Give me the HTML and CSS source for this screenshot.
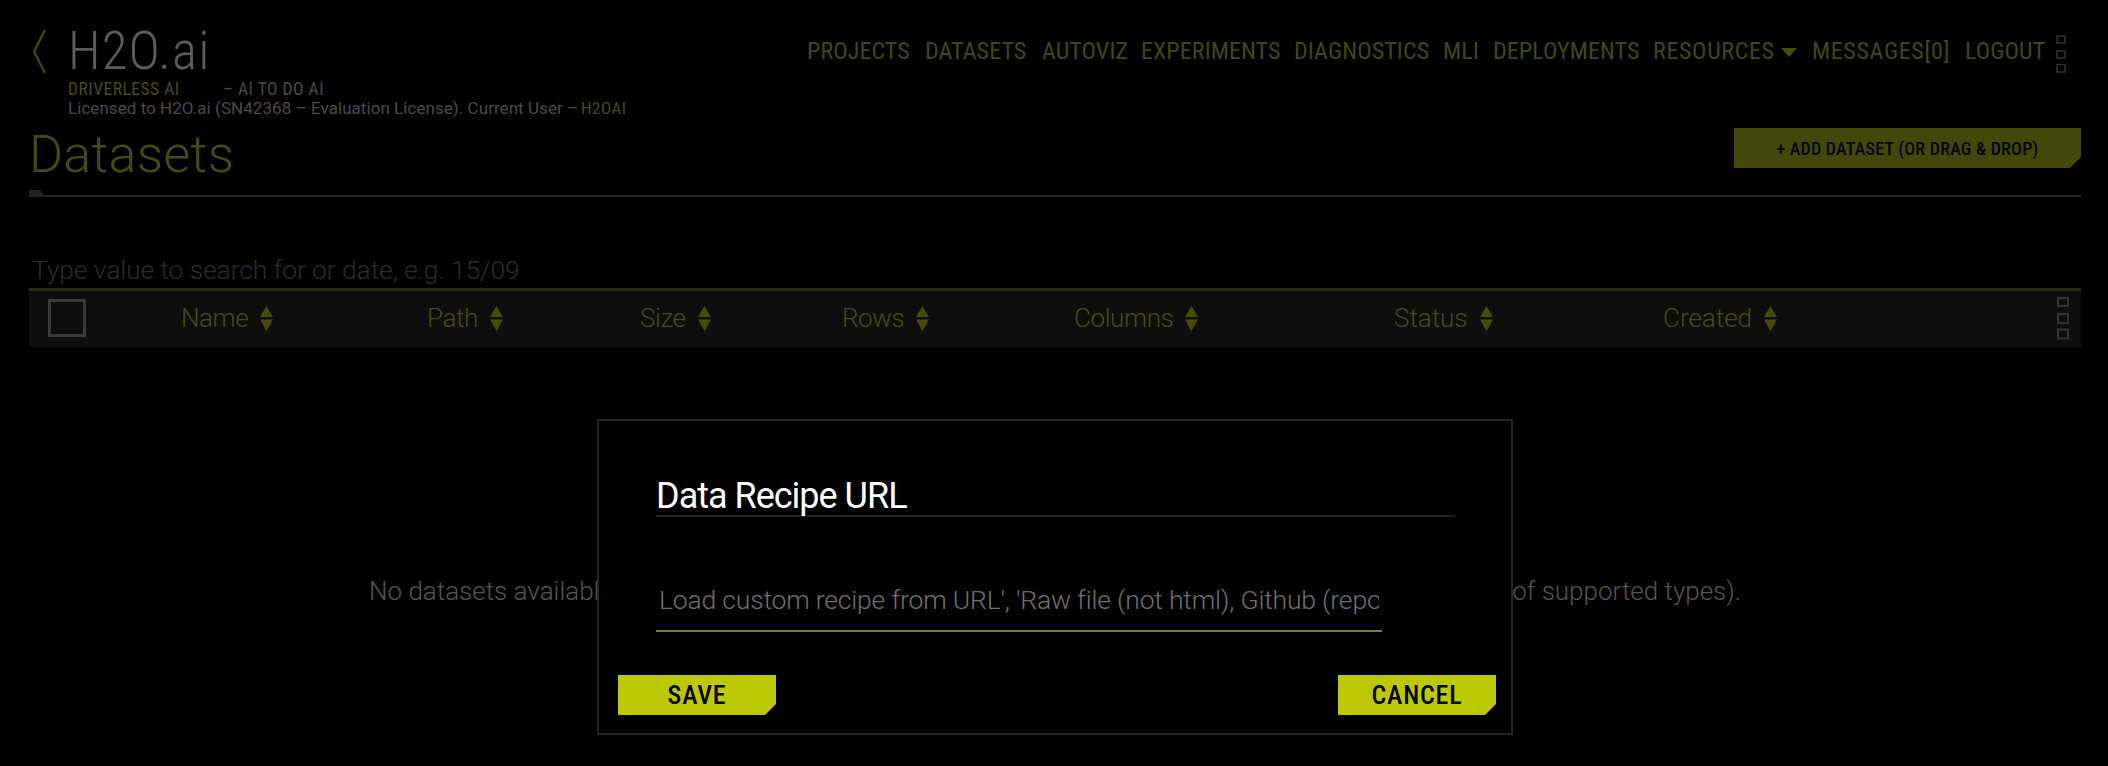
FILE: index.html
```html
<!DOCTYPE html>
<html lang="en">
<head>
<meta charset="utf-8">
<title>Datasets</title>
<link rel="stylesheet" href="styles.css">
</head>
<body>
<div class="page">
  <header class="top">
    <svg class="back" width="15" height="45" viewBox="0 0 15 45"><path d="M14 1 3 22.500 14 44" fill="none" stroke="currentColor" stroke-width="2.200"/></svg>
    <div class="brand">
      <div class="logo">H2O.ai</div>
      <div class="tagline"><span class="product">DRIVERLESS AI</span><span class="motto">– AI TO DO AI</span></div>
      <div class="license"><span class="holder">Licensed to H2O.ai (SN42368 – Evaluation License). Current User –</span><span class="user">H2OAI</span></div>
    </div>
    <nav class="nav">
      <a>PROJECTS</a><a>DATASETS</a><a>AUTOVIZ</a><a>EXPERIMENTS</a><a>DIAGNOSTICS</a><a>MLI</a><a>DEPLOYMENTS</a><a class="wide">RESOURCES</a><i class="caret"></i><a class="wide">MESSAGES[0]</a><a>LOGOUT</a>
      <svg class="dots" width="10" height="38" viewBox="0 0 10 38"><path d="M1 1h8v7H1zM1 16h8v7H1zM1 29.500h8v7.500H1z" fill="none" stroke="currentColor" stroke-width="1.500"/></svg>
    </nav>
  </header>
  <div class="heading">
    <h1>Datasets</h1>
    <button class="btn add"><span>+ ADD DATASET (OR DRAG &amp; DROP)</span></button>
  </div>
  <svg class="rule" width="2052" height="7" viewBox="0 0 2052 7"><path d="M0 0h11l4 5h2037v2H0z" fill="currentColor"/></svg>
  <div class="search">Type value to search for or date, e.g. 15/09</div>
  <div class="thead">
    <i class="check"></i>
    <div class="col name"><span>Name</span><svg class="sort" viewBox="0 0 13 25"><path d="M6.500 0 13 11H0zM0 13.500h13L6.500 25z" fill="currentColor"/></svg></div>
    <div class="col path"><span>Path</span><svg class="sort" viewBox="0 0 13 25"><path d="M6.500 0 13 11H0zM0 13.500h13L6.500 25z" fill="currentColor"/></svg></div>
    <div class="col size"><span>Size</span><svg class="sort" viewBox="0 0 13 25"><path d="M6.500 0 13 11H0zM0 13.500h13L6.500 25z" fill="currentColor"/></svg></div>
    <div class="col rows"><span>Rows</span><svg class="sort" viewBox="0 0 13 25"><path d="M6.500 0 13 11H0zM0 13.500h13L6.500 25z" fill="currentColor"/></svg></div>
    <div class="col columns"><span>Columns</span><svg class="sort" viewBox="0 0 13 25"><path d="M6.500 0 13 11H0zM0 13.500h13L6.500 25z" fill="currentColor"/></svg></div>
    <div class="col status"><span>Status</span><svg class="sort" viewBox="0 0 13 25"><path d="M6.500 0 13 11H0zM0 13.500h13L6.500 25z" fill="currentColor"/></svg></div>
    <div class="col created"><span>Created</span><svg class="sort" viewBox="0 0 13 25"><path d="M6.500 0 13 11H0zM0 13.500h13L6.500 25z" fill="currentColor"/></svg></div>
    <svg class="more" width="12" height="43" viewBox="0 0 12 43"><path d="M1 1h10v8H1zM1 17h10v9H1zM1 32.500h10v9H1z" fill="none" stroke="currentColor" stroke-width="2"/></svg>
  </div>
  <div class="empty"><span>No datasets available</span><span class="types">of supported types).</span></div>
</div>
<div class="modal">
  <h2><span>Data Recipe URL</span></h2>
  <div class="field"><span>Load custom recipe from URL', 'Raw file (not html), Github (repo</span></div>
  <div class="actions">
    <button class="btn save">SAVE</button>
    <button class="btn cancel">CANCEL</button>
  </div>
</div>
</body>
</html>
```
FILE: styles.css
```css
* { box-sizing: border-box; }
body {
  margin: 0;
  width: 2108px;
  height: 766px;
  overflow: hidden;
  background: #000;
  color: #4a4a4a;
  font-family: Roboto, sans-serif;
  font-stretch: 75%;
  white-space: nowrap;
}
.page { padding: 0 27px 0 29px; }
.top { display: flex; height: 122px; }
.back { margin: 29px 0 0 2px; color: #464d0b; flex: none; }
.brand { margin: 20px 0 0 22px; width: 640px; }
.logo { height: 60px; line-height: 62px; font-size: 53px; font-weight: 300; color: #5c5c5c; letter-spacing: 1.1px; }
.tagline { display: flex; height: 19px; line-height: 19px; font-size: 17.5px; letter-spacing: .5px; }
.product { width: 155px; color: #464d0b; }
.license { display: flex; height: 19px; line-height: 19px; font-size: 17px; font-stretch: 100%; letter-spacing: .05px; }
.holder { width: 513px; }
.user { color: #464d0b; font-stretch: 75%; letter-spacing: .5px; }
.nav {
  display: grid;
  grid-template-columns: 118px 117px 99px 153px 149px 50px 160px 128px 31px 153px 91px 10px;
  margin: 34px 0 0 99px;
  height: 40px;
  line-height: 35px;
  font-size: 24px;
  color: #41480b;
  letter-spacing: .1px;
}
.wide { letter-spacing: .65px; }
.caret { width: 16px; height: 9px; margin-top: 14px; background: #464d0b; clip-path: polygon(0 0, 100% 0, 50% 100%); }
.dots { margin-top: 1px; color: #333; }
.heading { display: flex; justify-content: space-between; height: 68px; }
h1 { margin: 0; line-height: 66px; font-size: 52px; font-weight: 300; color: #464b0b; font-stretch: 100%; letter-spacing: .3px; }
.btn {
  height: 40px;
  padding: 0;
  border: 0;
  background: #bdc906;
  color: #060600;
  font: 500 26px/40px Roboto, sans-serif;
  font-stretch: 75%;
  letter-spacing: .8px;
  clip-path: polygon(0 0, 100% 0, 100% 29px, calc(100% - 11px) 100%, 0 100%);
}
.add { width: 347px; margin-top: 6px; background: #42470a; font-size: 18px; line-height: 39px; letter-spacing: .22px; }
.rule { display: block; color: #222; }
.search { height: 93px; padding: 55px 0 0 3px; line-height: 36px; font-size: 26.500px; font-weight: 300; color: #2c2c2c; font-stretch: 100%; letter-spacing: -.12px; }
.thead {
  display: grid;
  grid-template-columns: 133px 246px 213px 202px 232px 320px 269px 394px 12px;
  height: 59px;
  margin-top: -2px;
  padding-left: 19px;
  background: #0e0e0e;
  border-top: 3px solid #292b0b;
  color: #464d0b;
}
.check { width: 38px; height: 38px; margin-top: 8px; border: 3px solid #3a3a3a; }
.col { display: flex; gap: 12px; font-size: 26px; line-height: 54px; font-weight: 300; font-stretch: 100%; letter-spacing: -.4px; }
.status, .created { letter-spacing: 0; }
.sort { width: 13px; height: 25px; margin-top: 15px; }
.more { margin-top: 6px; color: #333; }
.empty { display: flex; justify-content: space-between; padding: 224px 340px 0 340px; line-height: 40px; font-size: 26px; font-weight: 300; color: #555; font-stretch: 100%; }
.modal {
  position: absolute;
  left: 597px;
  top: 419px;
  width: 916px;
  height: 316px;
  padding: 57px 15px 0 19px;
  background: #000;
  border: 2px solid #242424;
}
h2 { width: 799px; height: 39px; margin: 0 0 0 38px; line-height: 37px; font-size: 36px; font-weight: 400; color: #fff; border-bottom: 2px solid #222; font-stretch: 100%; letter-spacing: -1px; }
.field { width: 726px; height: 68px; margin: 47px 0 0 38px; padding: 18px 3px 0 3px; line-height: 36px; font-size: 26.500px; font-weight: 300; color: #707070; border-bottom: 2px solid #75801f; font-stretch: 100%; letter-spacing: -.18px; }
.field span { display: block; overflow: hidden; }
.actions { display: flex; justify-content: space-between; margin-top: 43px; }
.save, .cancel { width: 158px; }
```
